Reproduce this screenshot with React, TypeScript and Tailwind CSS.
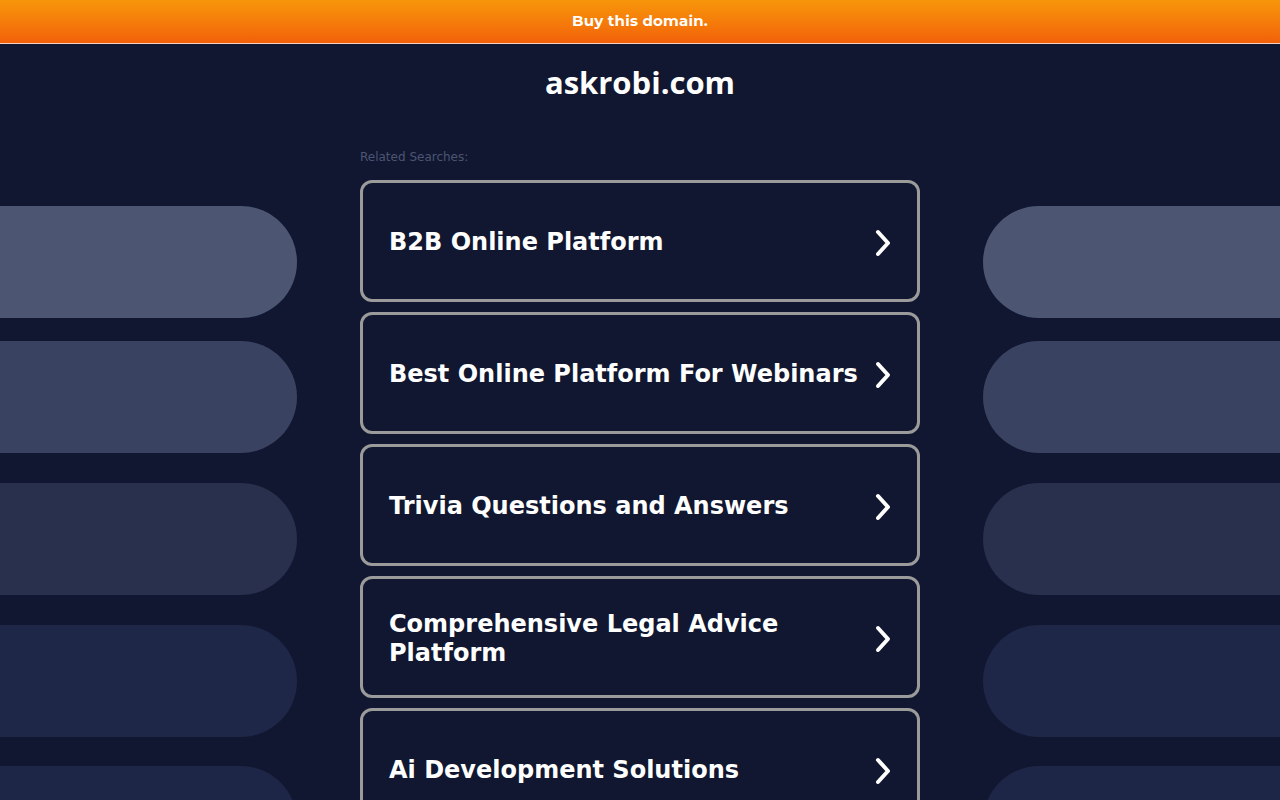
import React from 'react';

// Side decoration pills, top to bottom
const pills = [
  { color: 'bg-[#4c5672]', mt: 'mt-[206px]' },
  { color: 'bg-[#394260]', mt: 'mt-[23px]' },
  { color: 'bg-[#28304d]', mt: 'mt-[30px]' },
  { color: 'bg-[#1e2747]', mt: 'mt-[30px]' },
  { color: 'bg-[#1d2646]', mt: 'mt-[29px]' },
];

const searches = [
  'B2B Online Platform',
  'Best Online Platform For Webinars',
  'Trivia Questions and Answers',
  'Comprehensive Legal Advice Platform',
  'Ai Development Solutions',
];

const Chevron = () => (
  <svg width="18" height="30" viewBox="0 0 18 30" fill="none" className="shrink-0">
    <path
      d="M4 4 L14 15 L4 26"
      stroke="white"
      strokeWidth="4"
      strokeLinecap="round"
      strokeLinejoin="round"
    />
  </svg>
);

const PillColumn = ({ side }: { side: 'left' | 'right' }) => (
  <div className="flex flex-col w-[297px] shrink-0">
    {pills.map((p, i) => (
      <div
        key={i}
        className={`${p.mt} ${p.color} h-[112px] shrink-0 w-full ${
          side === 'left' ? 'rounded-r-[56px]' : 'rounded-l-[56px]'
        }`}
      />
    ))}
  </div>
);

export default function App() {
  return (
    <div className="w-full h-[800px] overflow-hidden bg-[#111730] flex flex-col">
      {/* Top banner */}
      <div className="h-[44px] shrink-0 bg-gradient-to-b from-[#f7960a] to-[#f2600a] border-b border-[#f4d2bd] flex items-center justify-center">
        <span className="text-white text-[15px] font-bold font-['Montserrat','Open_Sans',sans-serif] tracking-[0.2px]">
          Buy this domain.
        </span>
      </div>

      <div className="relative flex-1">
        {/* Side pills */}
        <div className="absolute inset-0 flex justify-between -mt-[44px] pointer-events-none">
          <PillColumn side="left" />
          <PillColumn side="right" />
        </div>

        <div className="relative flex flex-col items-center">
          <h1 className="mt-[20px] text-white text-[31px] font-bold leading-[36px] font-['Open_Sans',sans-serif]">
            askrobi.com
          </h1>

          <div className="w-[560px] mt-[50px]">
            <p className="text-[12px] leading-[14px] text-[#4b5573] font-['DejaVu_Sans',sans-serif]">
              Related Searches:
            </p>
            <div className="mt-[16px] flex flex-col gap-[10px]">
              {searches.map((s) => (
                <div
                  key={s}
                  className="h-[122px] shrink-0 border-[3px] border-[#9b9b9b] rounded-[12px] flex items-center justify-between pl-[26px] pr-[25px] pt-[3px] gap-4"
                >
                  <span className="text-white text-[24px] leading-[29px] font-bold font-['DejaVu_Sans',sans-serif]">
                    {s}
                  </span>
                  <Chevron />
                </div>
              ))}
            </div>
          </div>
        </div>
      </div>
    </div>
  );
}
